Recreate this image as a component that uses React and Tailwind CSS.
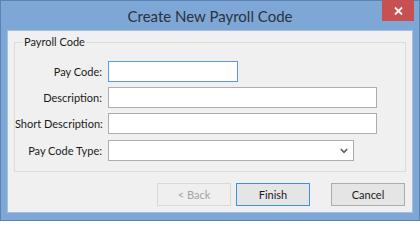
import React from "react";

const font = { fontFamily: '"Segoe UI", Lato, "Noto Sans", sans-serif' };

// one label + field row of the group box
const Row = ({ label, width, className = "", children }) => (
  <div className={`flex items-center ${className}`}>
    <label className="w-[88px] shrink-0 whitespace-nowrap text-right text-[11px] leading-none text-[#1b1b1b] pr-[1px]">
      {label}
    </label>
    <div className={`ml-[5px] ${width}`}>{children}</div>
  </div>
);

const TextBox = ({ focused }) => (
  <input
    type="text"
    className={`block h-[21px] w-full bg-white border outline-none ${
      focused ? "border-[#569de5]" : "border-[#abadb3]"
    }`}
  />
);

const Button = ({ children, variant, className = "" }) => {
  const styles = {
    disabled: "border-[#d9d9d9] bg-[#efefef] text-[#a3a3a3]",
    default: "border-[#3c91e6] bg-[#e5e5e5] text-[#1b1b1b]",
    normal: "border-[#adadad] bg-[#e5e5e5] text-[#1b1b1b]",
  };
  return (
    <button
      type="button"
      disabled={variant === "disabled"}
      className={`block h-[23px] w-[74px] border text-[11px] leading-none ${styles[variant]} ${className}`}
    >
      {children}
    </button>
  );
};

export default function App() {
  return (
    <div
      style={font}
      className="w-[420px] h-[221px] bg-[#7ea7d6] border border-[#5b82b3] flex flex-col"
    >
      {/* title bar */}
      <div className="h-[29px] shrink-0 relative flex items-center justify-center">
        <span className="text-[15px] text-[#2a3240] leading-none mt-[2px]">
          Create New Payroll Code
        </span>
        <div className="absolute right-[5px] top-[-1px] w-[32px] h-[21px] bg-[#c75050] flex items-center justify-center">
          <svg width="9" height="8" viewBox="0 0 9 8">
            <path d="M1 0.5 L8 7.5 M8 0.5 L1 7.5" stroke="#fff" strokeWidth="1.8" />
          </svg>
        </div>
      </div>

      {/* client area */}
      <div className="mx-[6px] h-[183px] shrink-0 border border-[#a3c0e3] bg-[#f0f0f0] pt-[11px] px-[6px]">
        <div className="relative h-[130px] w-[392px] border border-[#dcdcdc] pt-[18px]">
          <span className="absolute left-[8px] top-[-7px] bg-[#f0f0f0] px-[1px] text-[11px] leading-none text-[#1b1b1b]">
            Payroll Code
          </span>
          <Row label="Pay Code:" width="w-[130px]">
            <TextBox focused />
          </Row>
          <Row label="Description:" width="w-[269px]" className="mt-[5px]">
            <TextBox />
          </Row>
          <Row label="Short Description:" width="w-[269px]" className="mt-[5px]">
            <TextBox />
          </Row>
          <Row label="Pay Code Type:" width="w-[246px]" className="mt-[6px]">
            <div className="h-[21px] w-full bg-white border border-[#abadb3] flex items-center justify-end pr-[5px]">
              <svg width="8" height="6" viewBox="0 0 8 6">
                <path d="M0.8 1 L4 4.3 L7.2 1" fill="none" stroke="#606060" strokeWidth="1.7" />
              </svg>
            </div>
          </Row>
        </div>

        <div className="flex justify-end mt-[11px] mr-[1px]">
          <Button variant="disabled">&lt; Back</Button>
          <Button variant="default" className="ml-[5px]">Finish</Button>
          <Button variant="normal" className="ml-[21px]">Cancel</Button>
        </div>
      </div>
    </div>
  );
}
